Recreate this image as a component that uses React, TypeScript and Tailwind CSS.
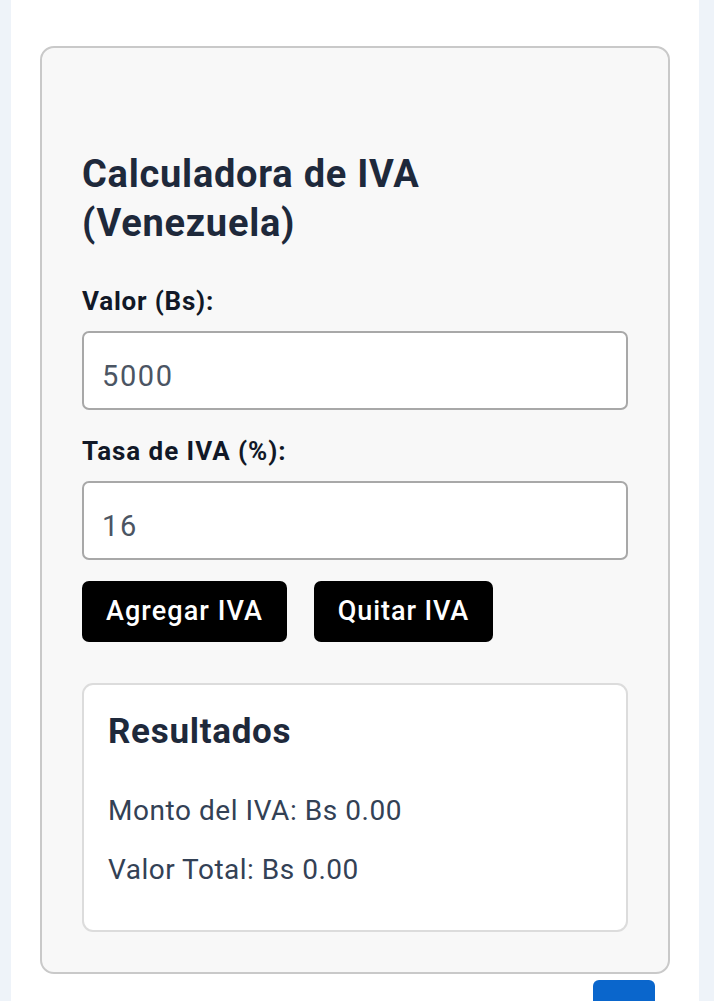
import React from "react";

export default function App() {
  return (
    <div
      className="min-h-screen w-full bg-[#eef3f9] flex"
      style={{ fontFamily: "Roboto, 'Noto Sans', sans-serif" }}
    >
      <div className="ml-[11px] w-[688px] bg-white pt-[46px] pl-[29px] pr-[30px] pb-[40px] flex flex-col">
        <div className="w-[630px] border-2 border-[#c9c9c9] rounded-[14px] bg-[#f8f8f8] px-[40px] pt-[102px] pb-[40px] flex flex-col">
          <h1 className="text-[38px] leading-[49px] font-bold text-[#1e293b] tracking-[0.75px]">
            Calculadora de IVA
            <br />
            (Venezuela)
          </h1>

          <label className="mt-[38px] text-[26px] leading-[30px] font-bold text-[#111827] tracking-[0.8px]">
            Valor (Bs):
          </label>
          <input
            type="number"
            defaultValue="5000"
            className="mt-[15px] h-[79px] w-full border-2 border-[#a8a8a8] rounded-[7px] bg-white pl-[18px] pt-[10px] text-[29px] tracking-[1.6px] text-[#4b5563] outline-none"
          />

          <label className="mt-[26px] text-[26px] leading-[30px] font-bold text-[#111827] tracking-[0.95px]">
            Tasa de IVA (%):
          </label>
          <input
            type="number"
            defaultValue="16"
            className="mt-[15px] h-[79px] w-full border-2 border-[#a8a8a8] rounded-[7px] bg-white pl-[18px] pt-[10px] text-[29px] tracking-[1.6px] text-[#4b5563] outline-none"
          />

          <div className="mt-[21px] flex gap-[27px]">
            <button className="h-[61px] w-[205px] rounded-[7px] bg-black text-white text-[27px] font-medium tracking-[1.1px]">
              Agregar IVA
            </button>
            <button className="h-[61px] w-[179px] rounded-[7px] bg-black text-white text-[27px] font-medium tracking-[0.9px]">
              Quitar IVA
            </button>
          </div>

          <div className="mt-[41px] h-[249px] border-2 border-[#dcdcdc] rounded-[11px] bg-white px-[24px] pt-[27px] flex flex-col">
            <h2 className="text-[35px] leading-[40px] font-bold text-[#1e293b] tracking-[0.7px]">
              Resultados
            </h2>
            <p className="mt-[42px] text-[28px] leading-[34px] text-[#334155] tracking-[0.55px]">
              Monto del IVA: Bs 0.00
            </p>
            <p className="mt-[25px] text-[28px] leading-[34px] text-[#334155] tracking-[0.5px]">
              Valor Total: Bs 0.00
            </p>
          </div>
        </div>

        <div className="mt-[6px] flex justify-end pr-[14px]">
          <div className="h-[60px] w-[62px] rounded-[6px] bg-[#0a66cc]" />
        </div>
      </div>
    </div>
  );
}
